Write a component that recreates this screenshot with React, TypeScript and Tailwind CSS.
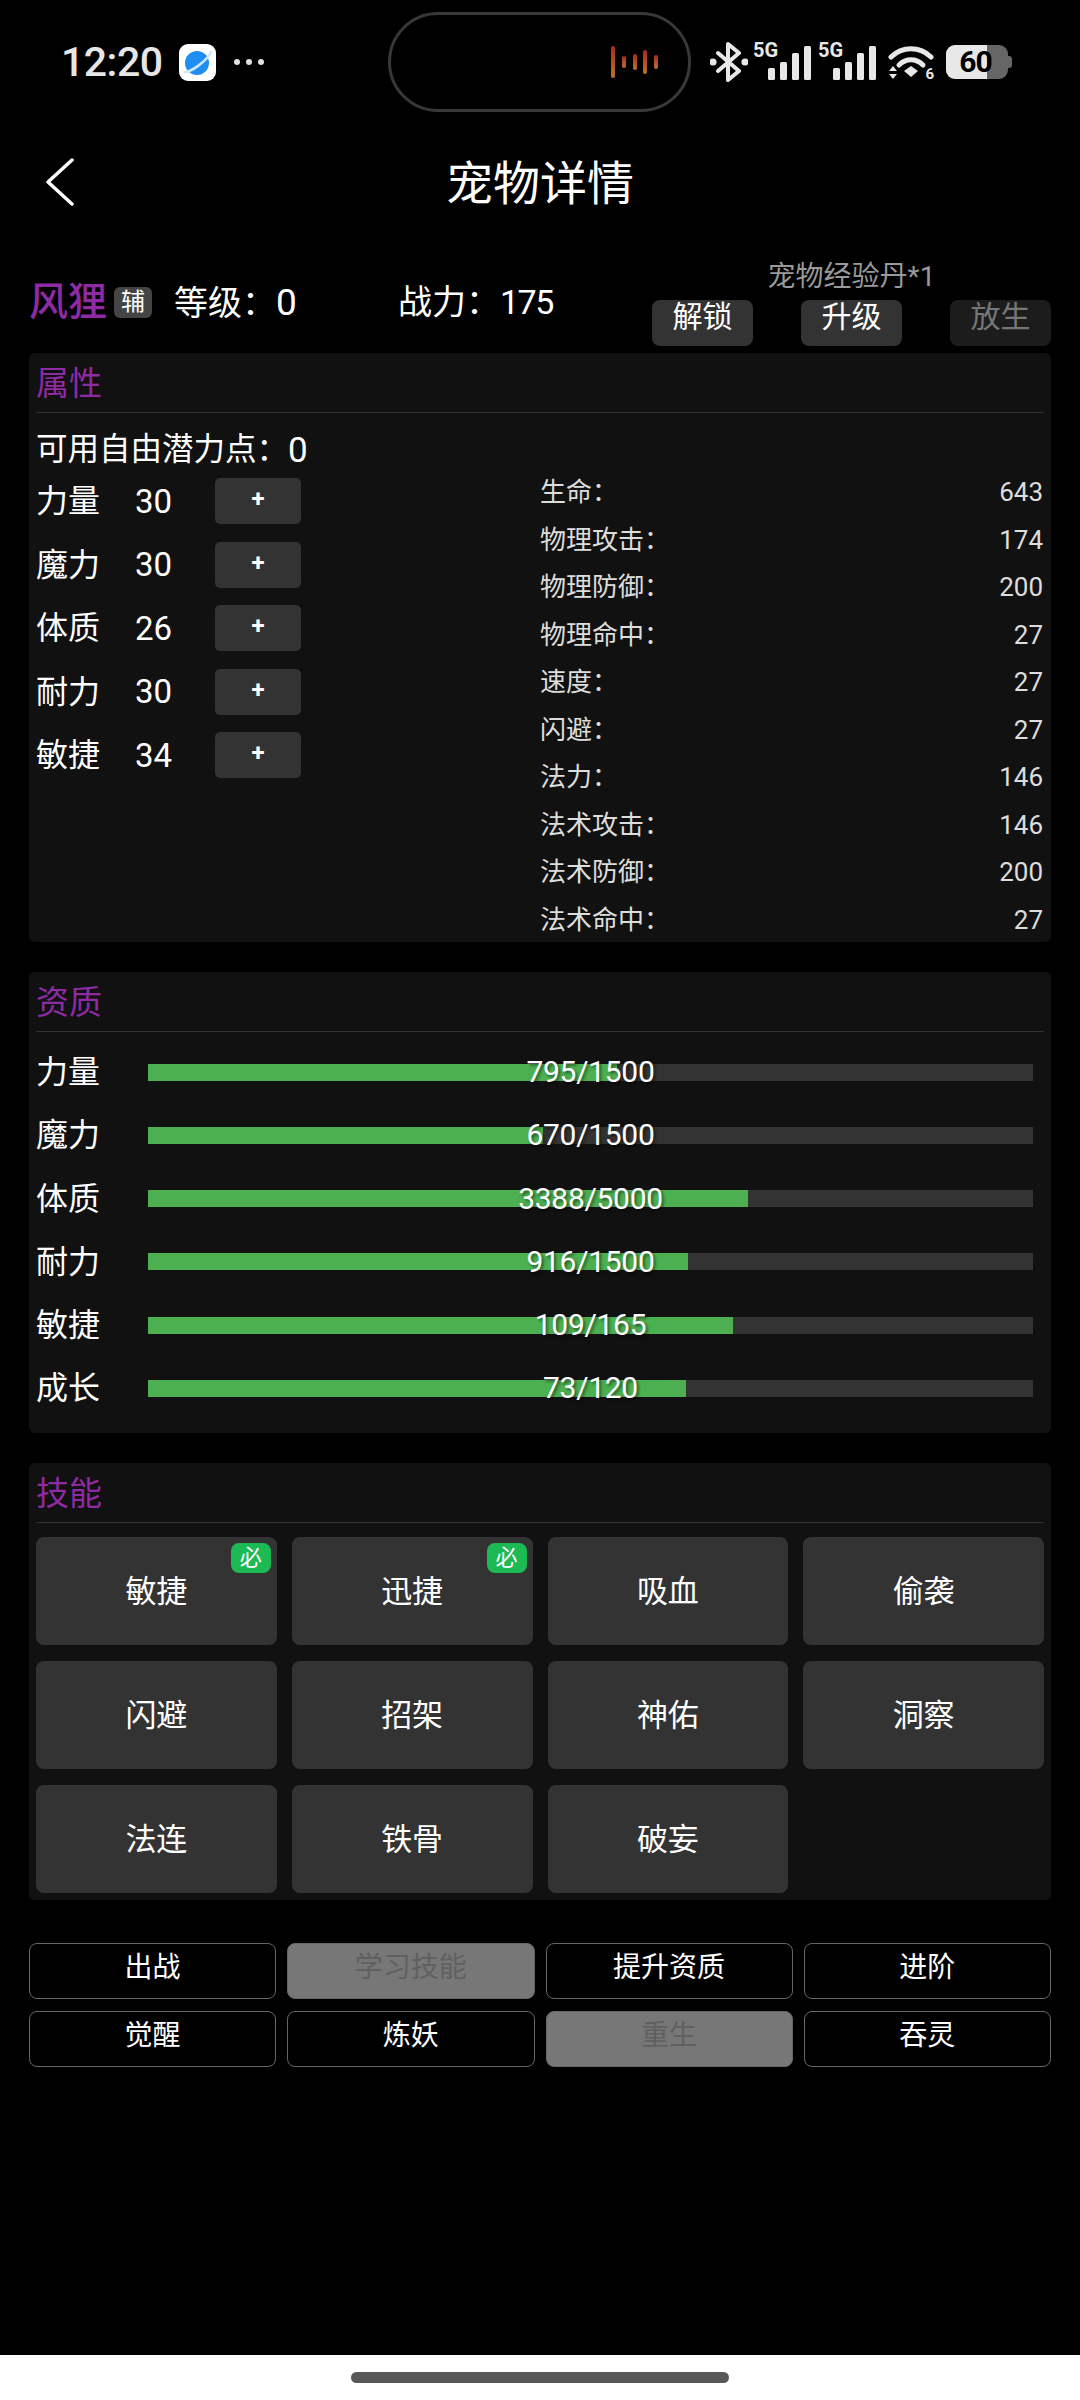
import React from 'react';

const FONT = "font-['Roboto','Noto_Sans_CJK_SC',sans-serif]";

const attrs = [
  { name: '力量', value: 30 },
  { name: '魔力', value: 30 },
  { name: '体质', value: 26 },
  { name: '耐力', value: 30 },
  { name: '敏捷', value: 34 },
];

const stats = [
  { name: '生命', value: 643 },
  { name: '物理攻击', value: 174 },
  { name: '物理防御', value: 200 },
  { name: '物理命中', value: 27 },
  { name: '速度', value: 27 },
  { name: '闪避', value: 27 },
  { name: '法力', value: 146 },
  { name: '法术攻击', value: 146 },
  { name: '法术防御', value: 200 },
  { name: '法术命中', value: 27 },
];

const aptitudes = [
  { name: '力量', value: 795, max: 1500 },
  { name: '魔力', value: 670, max: 1500 },
  { name: '体质', value: 3388, max: 5000 },
  { name: '耐力', value: 916, max: 1500 },
  { name: '敏捷', value: 109, max: 165 },
  { name: '成长', value: 73, max: 120 },
];

const skills = [
  { name: '敏捷', must: true },
  { name: '迅捷', must: true },
  { name: '吸血' },
  { name: '偷袭' },
  { name: '闪避' },
  { name: '招架' },
  { name: '神佑' },
  { name: '洞察' },
  { name: '法连' },
  { name: '铁骨' },
  { name: '破妄' },
];

const actions = [
  { name: '出战' },
  { name: '学习技能', disabled: true },
  { name: '提升资质' },
  { name: '进阶' },
  { name: '觉醒' },
  { name: '炼妖' },
  { name: '重生', disabled: true },
  { name: '吞灵' },
];

const SignalIcon: React.FC = () => (
  <div className="relative w-[58px] h-[40px]">
    <svg width="58" height="40" viewBox="0 0 58 40" fill="#e8e8e8">
      <rect x="15" y="26" width="7" height="12" rx="1.5" />
      <rect x="27" y="20" width="7" height="18" rx="1.5" />
      <rect x="39" y="11" width="7" height="27" rx="1.5" />
      <rect x="51" y="4" width="7" height="34" rx="1.5" />
    </svg>
    <span className="absolute left-0 top-[-2px] text-[20px] leading-[20px] font-bold text-[#e8e8e8]">5G</span>
  </div>
);

const StatusBar: React.FC = () => (
  <div className="h-[124px] flex items-center shrink-0">
    {/* Left: clock + app icon */}
    <div className="w-[388px] flex items-center pl-[61px]">
      <span className="text-[41px] leading-none font-medium text-[#e6e6e6] w-[101px] tracking-[-0.5px]">12:20</span>
      <svg width="37" height="37" viewBox="0 0 37 37" className="ml-[17px]">
        <rect width="37" height="37" rx="9" fill="#ffffff" />
        <circle cx="18" cy="19" r="12" fill="#1e8ff0" />
        <path d="M6 28C12 28 28 17 32 8" fill="none" stroke="#cfe6fb" strokeWidth="2.5" strokeLinecap="round" />
      </svg>
      <div className="flex gap-[6px] ml-[18px]">
        <div className="w-[6px] h-[6px] rounded-full bg-[#e0e0e0]" />
        <div className="w-[6px] h-[6px] rounded-full bg-[#e0e0e0]" />
        <div className="w-[6px] h-[6px] rounded-full bg-[#e0e0e0]" />
      </div>
    </div>

    {/* Island */}
    <div className="w-[303px] h-[100px] rounded-[50px] border-[3px] border-[#383838] flex items-center justify-end pr-[29px]">
      <svg width="48" height="34" viewBox="0 0 48 34">
        <defs>
          <linearGradient id="wave" x1="0" y1="0" x2="0" y2="1">
            <stop offset="0" stopColor="#a82a1e" />
            <stop offset="1" stopColor="#b8742a" />
          </linearGradient>
        </defs>
        <rect x="0" y="1" width="4" height="32" rx="2" fill="url(#wave)" />
        <rect x="11" y="11" width="4" height="12" rx="2" fill="url(#wave)" />
        <rect x="22" y="9" width="4" height="16" rx="2" fill="url(#wave)" />
        <rect x="32" y="5" width="4" height="24" rx="2" fill="url(#wave)" />
        <rect x="43" y="10" width="4" height="14" rx="2" fill="url(#wave)" />
      </svg>
    </div>

    {/* Right: system icons */}
    <div className="flex items-center pl-[19px]">
      <svg width="38" height="40" viewBox="0 0 38 40" fill="none" stroke="#e8e8e8" strokeWidth="4" strokeLinejoin="round" strokeLinecap="round">
        <path d="M8 11L29 29L18 38V2L29 11L8 29" />
        <circle cx="3" cy="20" r="1.6" fill="#e8e8e8" />
        <circle cx="35" cy="20" r="1.6" fill="#e8e8e8" />
      </svg>
      <div className="ml-[5px]"><SignalIcon /></div>
      <div className="ml-[7px]"><SignalIcon /></div>
      <div className="relative ml-[12px] w-[46px] h-[36px]">
        <svg width="46" height="36" viewBox="0 0 46 36" fill="none">
          <path d="M3 13C14 2 32 2 43 13" stroke="#e8e8e8" strokeWidth="5" strokeLinecap="round" />
          <path d="M11 21C18 14 28 14 35 21" stroke="#e8e8e8" strokeWidth="5" strokeLinecap="round" />
          <path d="M16 27L23 22L30 27L23 33Z" fill="#e8e8e8" />
          <path d="M1 27L5 22L9 27Z M1 30L5 35L9 30Z" fill="#e8e8e8" />
        </svg>
        <span className="absolute right-0 bottom-[-2px] text-[15px] leading-[15px] font-bold text-[#e8e8e8]">6</span>
      </div>
      <div className="relative ml-[12px] w-[62px] h-[34px] rounded-[9px] overflow-hidden bg-[#666666] flex">
        <div className="w-[41px] bg-[#e8e8e8]" />
        <span className="absolute inset-0 pr-[3px] flex items-center justify-center text-[30px] leading-none font-bold text-black tracking-[-1px]">60</span>
      </div>
      <div className="w-[4px] h-[12px] rounded-r-[3px] bg-[#666666]" />
    </div>
  </div>
);

const Section: React.FC<{ title: string; children: React.ReactNode }> = ({ title, children }) => (
  <div className="bg-[#111111] rounded-[6px] px-[7px]">
    <div className="h-[60px] border-b border-[#333333] pt-[2px] flex items-center">
      <span className="text-[33px] leading-none text-[#8e2aa3]">{title}</span>
    </div>
    {children}
  </div>
);

export default function App() {
  return (
    <div className={`w-[1080px] h-[2400px] bg-black text-white flex flex-col ${FONT}`}>
      <StatusBar />

      {/* Nav */}
      <div className="h-[116px] shrink-0 relative flex items-center justify-center pt-[2px]">
        <svg width="30" height="48" viewBox="0 0 30 48" fill="none" className="absolute left-[45px] top-[34px]">
          <path d="M27 2L3 24L27 46" stroke="#ffffff" strokeWidth="3.5" strokeLinecap="round" strokeLinejoin="round" />
        </svg>
        <h1 className="text-[47px] leading-none font-normal">宠物详情</h1>
      </div>

      <div className="px-[29px] flex flex-col">
        {/* Pet header */}
        <div className="h-[113px] flex justify-between">
          <div className="flex items-center h-[44px] mt-[40px] text-[34px] leading-none">
            <span className="text-[39px] font-medium text-[#8e2aa3] leading-none">风狸</span>
            <span className="ml-[7px] w-[38px] h-[31px] rounded-[6px] bg-[#444444] text-[24px] flex items-center justify-center">辅</span>
            <span className="ml-[22px] w-[224px]">等级：<span className="text-[37px]">0</span></span>
            <span>战力：<span className="tracking-[-1.5px]">175</span></span>
          </div>
          <div className="w-[399px] flex flex-col items-center">
            <div className="mt-[23px] h-[28px] mb-[9px] text-[28px] leading-none text-[#999999]">宠物经验丹*1</div>
            <div className="flex gap-[48px]">
              <button className="w-[101px] h-[46px] pb-[12px] rounded-[8px] bg-[#333333] text-[30px] leading-none">解锁</button>
              <button className="w-[101px] h-[46px] pb-[12px] rounded-[8px] bg-[#333333] text-[30px] leading-none">升级</button>
              <button className="w-[101px] h-[46px] pb-[12px] rounded-[8px] bg-[#1c1c1c] text-[30px] leading-none text-[#777777]">放生</button>
            </div>
          </div>
        </div>

        {/* Attributes */}
        <Section title="属性">
          <div className="flex h-[529px]">
            <div className="w-[504px] pt-[17px]">
              <div className="h-[40px] flex items-center text-[31.5px] leading-none">可用自由潜力点：<span className="text-[35px]">0</span></div>
              <div className="mt-[8px] flex flex-col gap-[17.5px]">
                {attrs.map((a) => (
                  <div key={a.name} className="h-[46px] flex items-center text-[32px] leading-none">
                    <span className="w-[99px]">{a.name}</span>
                    <span className="w-[80px] text-[33px]">{a.value}</span>
                    <button className="w-[86px] h-[46px] pb-[4px] rounded-[5px] bg-[#333333] text-[24px] font-bold leading-none">+</button>
                  </div>
                ))}
              </div>
            </div>
            <div className="flex-1 pr-[1px] pt-[62px] flex flex-col gap-[13.5px]">
              {stats.map((s) => (
                <div key={s.name} className="h-[34px] flex items-center justify-between text-[26px] leading-none text-[#dddddd]">
                  <span>{s.name}：</span>
                  <span>{s.value}</span>
                </div>
              ))}
            </div>
          </div>
        </Section>

        {/* Aptitude */}
        <div className="mt-[30px]">
          <Section title="资质">
            <div className="pr-[11px] pt-[17px] pb-[22px] flex flex-col gap-[17.3px]">
              {aptitudes.map((a) => (
                <div key={a.name} className="h-[46px] flex items-center">
                  <span className="w-[112px] text-[32px] leading-none">{a.name}</span>
                  <div className="relative flex-1 h-[17px] bg-[#333333]">
                    <div className="h-full bg-[#4caf50]" style={{ width: `${(a.value / a.max) * 100}%` }} />
                    <span className="absolute inset-0 flex items-center justify-center text-[30px] leading-none tracking-[-0.3px] [text-shadow:2px_2px_3px_rgba(0,0,0,0.5)]">
                      {a.value}/{a.max}
                    </span>
                  </div>
                </div>
              ))}
            </div>
          </Section>
        </div>

        {/* Skills */}
        <div className="mt-[30px]">
          <Section title="技能">
            <div className="pt-[14px] pb-[7px] grid grid-cols-4 gap-x-[15px] gap-y-[16px]">
              {skills.map((s) => (
                <div key={s.name} className="relative h-[108px] rounded-[8px] bg-[#333333] flex items-center justify-center text-[31px] leading-none">
                  {s.name}
                  {s.must && (
                    <span className="absolute top-[6px] right-[6px] w-[40px] h-[30px] rounded-[8px] bg-[#1db954] text-[22px] leading-none flex items-center justify-center">必</span>
                  )}
                </div>
              ))}
            </div>
          </Section>
        </div>

        {/* Actions */}
        <div className="mt-[43px] grid grid-cols-4 gap-x-[11px] gap-y-[12px]">
          {actions.map((a) => (
            <button
              key={a.name}
              className={`h-[56px] pb-[6px] rounded-[8px] border text-[28px] leading-none ${
                a.disabled ? 'bg-[#777777] border-[#666666] text-[#606060]' : 'bg-black border-[#666666] text-white'
              }`}
            >
              {a.name}
            </button>
          ))}
        </div>
      </div>

      {/* Gesture bar */}
      <div className="mt-auto h-[45px] bg-white flex items-center justify-center">
        <div className="w-[378px] h-[11px] rounded-full bg-[#585858]" />
      </div>
    </div>
  );
}
